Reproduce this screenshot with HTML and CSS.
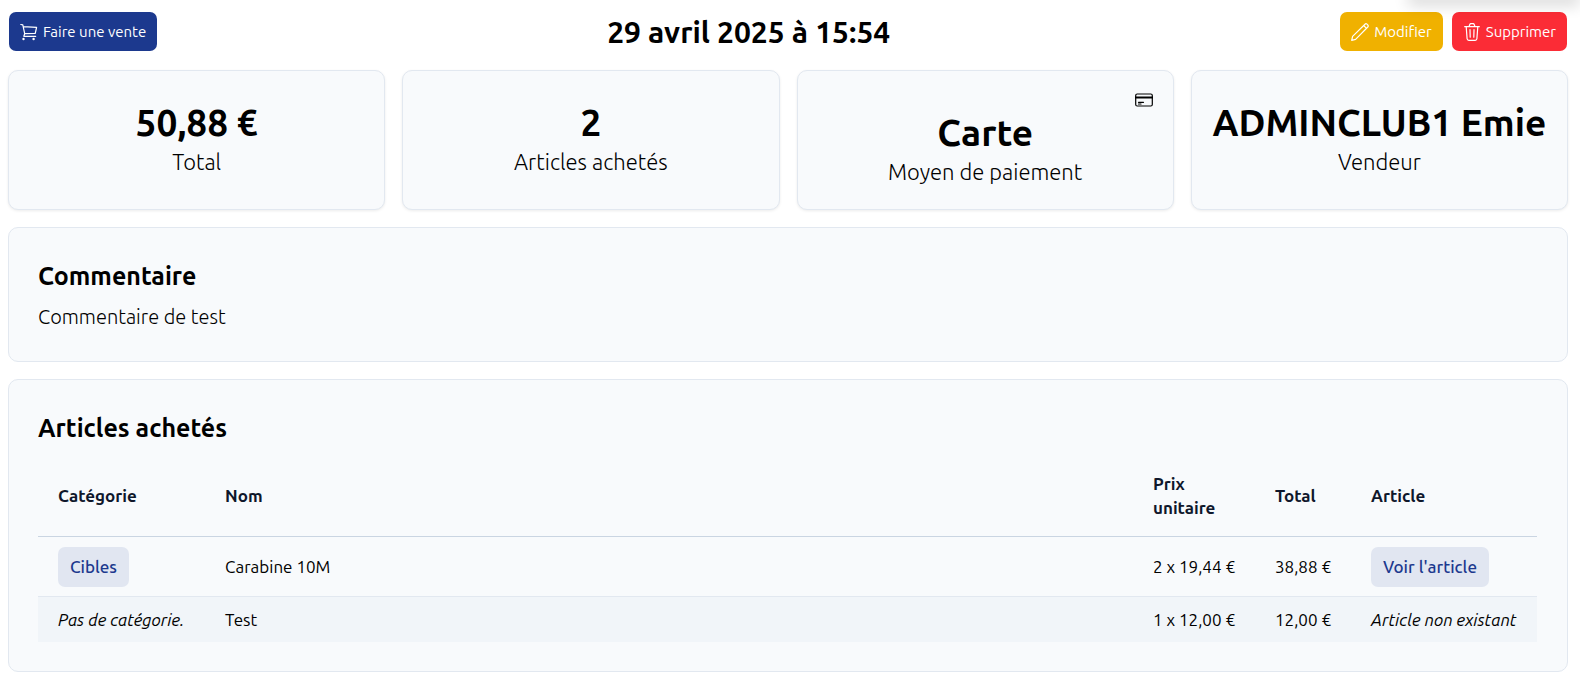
FILE: index.html
```html
<!DOCTYPE html>
<html lang="fr">
<head>
  <meta charset="UTF-8" />
  <title>Vente du 29 avril 2025 à 15:54</title>
  <meta name="viewport" content="width=device-width, initial-scale=1.0" />
  <link rel="stylesheet" href="styles.css">
</head>
<body>

<div class="toast-shadow"></div>

<header class="topbar">
  <button type="button" class="btn btn-primary">
    <svg class="icon" viewBox="0 0 18 18" aria-hidden="true">
      <path d="M.8 1.500l2 .3 1.900 8.900-.9 2.600h11.900M3.300 3.600l13.300.8-1.400 6.100-10.500.2" />
      <circle class="fill" cx="3.500" cy="16" r="1.200" />
      <circle class="fill" cx="13.600" cy="16" r="1.200" />
    </svg>
    Faire une vente
  </button>
  <h1 class="title">29 avril 2025 à 15:54</h1>
  <div class="topbar-right">
    <button type="button" class="btn btn-warning">
      <svg class="icon" viewBox="0 0 18 18" aria-hidden="true">
        <path d="M.7 17.300l.9-3.900L14 1.200c.6-.6 1.400-.6 2 0l.8.8c.6.6.6 1.400 0 2L4.600 16.400zM12.700 2.500l2.800 2.800" />
      </svg>
      Modifier
    </button>
    <button type="button" class="btn btn-danger">
      <svg class="icon" viewBox="0 0 18 18" aria-hidden="true">
        <path d="M1.700 3.700h14.600M6 3.700l.8-2.200c.2-.5.500-.8 1-.8h2.400c.5 0 .8.300 1 .8l.8 2.200M3.200 3.700l.9 12c.1 1 .8 1.600 1.700 1.600h6.400c.9 0 1.600-.6 1.700-1.600l.9-12M7 6.700l.2 7.500M11 6.700l-.2 7.500" />
      </svg>
      Supprimer
    </button>
  </div>
</header>

<main class="content">
  <section class="stats">
    <div class="card stat">
      <p class="value">50,88 €</p>
      <p class="label">Total</p>
    </div>
    <div class="card stat">
      <p class="value">2</p>
      <p class="label">Articles achetés</p>
    </div>
    <div class="card stat stat-with-icon">
      <svg class="stat-icon" viewBox="0 0 18 18" aria-hidden="true">
        <rect x=".7" y="3" width="16.600" height="12" rx="1.500" />
        <path class="thick" d="M.7 6.500h16.600" />
        <path d="M3.500 11.300h5M3.500 13h2.500" />
      </svg>
      <p class="value">Carte</p>
      <p class="label">Moyen de paiement</p>
    </div>
    <div class="card stat">
      <p class="value">ADMINCLUB1 Emie</p>
      <p class="label">Vendeur</p>
    </div>
  </section>

  <section class="card panel">
    <h2>Commentaire</h2>
    <p class="comment">Commentaire de test</p>
  </section>

  <section class="card panel">
    <h2>Articles achetés</h2>
    <table class="articles">
      <colgroup>
        <col class="col-category">
        <col>
        <col class="col-price">
        <col class="col-total">
        <col class="col-article">
      </colgroup>
      <thead>
        <tr>
          <th>Catégorie</th>
          <th>Nom</th>
          <th>Prix unitaire</th>
          <th>Total</th>
          <th>Article</th>
        </tr>
      </thead>
      <tbody>
        <tr>
          <td><a class="tag" href="#">Cibles</a></td>
          <td>Carabine 10M</td>
          <td>2 x 19,44 €</td>
          <td>38,88 €</td>
          <td><a class="tag" href="#">Voir l'article</a></td>
        </tr>
        <tr>
          <td><i>Pas de catégorie.</i></td>
          <td>Test</td>
          <td>1 x 12,00 €</td>
          <td>12,00 €</td>
          <td><i>Article non existant</i></td>
        </tr>
      </tbody>
    </table>
  </section>
</main>

</body>
</html>
```
FILE: styles.css
```css
* {
  box-sizing: border-box;
}
body {
  margin: 0;
  padding: 12px 12px 10px 8px;
  background: #fff;
  color: #000;
  font-family: Ubuntu, "Open Sans", "Noto Sans", sans-serif;
  font-size: 17px;
  line-height: 24px;
}
h1, h2, p {
  margin: 0;
}

/* header */
.topbar {
  display: flex;
  justify-content: space-between;
  align-items: center;
  padding: 0 1px;
  margin-bottom: 19px;
}
.topbar-right {
  display: flex;
  gap: 9px;
}
.title {
  font-size: 30px;
  line-height: 36px;
  font-weight: 600;
}
.btn {
  display: inline-flex;
  align-items: center;
  gap: 5px;
  height: 39px;
  padding: 0 11px;
  border: none;
  border-radius: 7px;
  color: #fff;
  font-family: inherit;
  font-size: 15px;
  white-space: nowrap;
  cursor: pointer;
}
.btn-primary {
  background: #1c398e;
}
.btn-warning {
  background: #f0b100;
}
.btn-danger {
  background: #fb2c36;
}
.icon, .stat-icon {
  width: 18px;
  height: 18px;
  fill: none;
  stroke: currentColor;
  stroke-width: 1.2;
  stroke-linecap: round;
  stroke-linejoin: round;
}
.icon .fill {
  fill: currentColor;
  stroke: none;
}
.stat-icon .thick {
  stroke-width: 2;
}
.toast-shadow {
  position: absolute;
  top: -10px;
  right: 0;
  width: 172px;
  height: 10px;
  box-shadow: 0 4px 15px rgba(0,0,0,0.2);
}

/* cards */
.content {
  display: flex;
  flex-direction: column;
  gap: 17px;
}
.card {
  background: #f8fafc;
  border: 1px solid #e2e8f0;
  border-radius: 10px;
}
.stats {
  display: grid;
  grid-template-columns: repeat(4, 1fr);
  gap: 17px;
}
.stat {
  display: flex;
  flex-direction: column;
  padding: 32px 20px 18px;
  text-align: center;
  box-shadow: 0 1px 3px rgba(0,0,0,0.08);
}
.stat-with-icon {
  padding-top: 20px;
}
.stat-icon {
  align-self: flex-end;
  margin-bottom: 4px;
}
.value {
  font-size: 37px;
  line-height: 40px;
  font-weight: 600;
  white-space: nowrap;
}
.label {
  font-size: 22px;
  line-height: 38px;
  font-weight: 300;
}
.panel {
  padding: 29px 30px 29px 29px;
}
.panel h2 {
  font-size: 25px;
  line-height: 38px;
  font-weight: 600;
}
.comment {
  margin-top: 7px;
  font-size: 20px;
  line-height: 30px;
  font-weight: 300;
}

/* table */
.articles {
  width: 100%;
  margin-top: 8px;
  table-layout: fixed;
  border-collapse: separate;
  border-spacing: 0;
  text-align: left;
}
.col-category {
  width: 167px;
}
.col-price {
  width: 122px;
}
.col-total {
  width: 96px;
}
.col-article {
  width: 186px;
}
.articles th {
  padding: 17px 20px 16px;
  border-bottom: 1px solid #cad5e2;
  color: #0f172b;
  font-weight: 600;
}
.articles td {
  padding: 10px 20px 9px;
  white-space: nowrap;
}
.articles tbody tr + tr td {
  padding-top: 11px;
  padding-bottom: 10px;
  border-top: 1px solid #e2e8f0;
  background: #f1f5f9;
}
.tag {
  display: inline-block;
  vertical-align: top;
  padding: 8px 12px;
  border-radius: 7px;
  background: #e1e6f1;
  color: #1c398e;
  font-weight: 500;
  text-decoration: none;
}
```
